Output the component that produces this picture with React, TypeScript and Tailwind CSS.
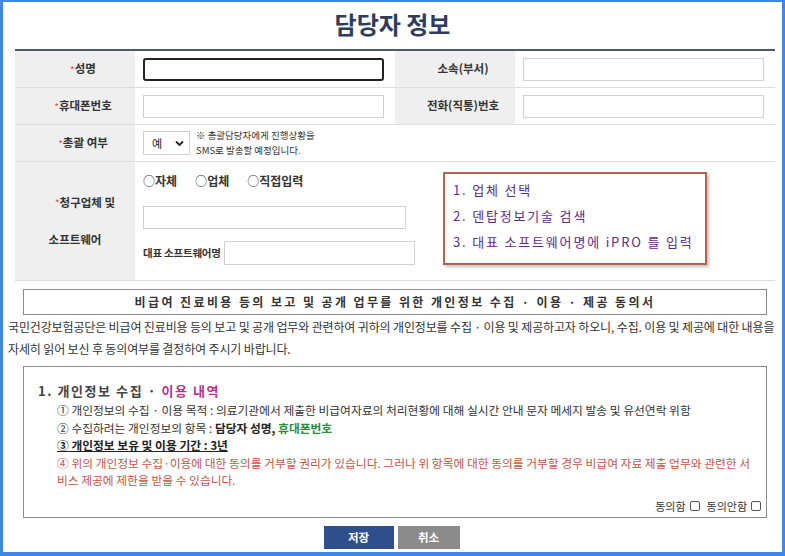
const font = { fontFamily: '"Noto Sans CJK KR", "Noto Sans", sans-serif' };

function Label({ children, required }: { children: React.ReactNode; required?: boolean }) {
  return (
    <div className="flex items-center justify-center bg-[#efefef] pl-4 text-[11.5px] font-semibold text-[#333] border-b border-[#dedede]">
      {required && <span className="text-[#d9534f] text-[10px] font-normal">*</span>}
      {children}
    </div>
  );
}

function Field({ focused }: { focused?: boolean }) {
  return (
    <div className="flex items-center pl-2 border-b border-[#dedede]">
      <div
        className={
          focused
            ? 'w-[241px] h-[23px] border-2 border-[#222] rounded-[3px] bg-white'
            : 'w-[241px] h-[23px] border border-[#d2d2d2] bg-white'
        }
      />
    </div>
  );
}

export default function App() {
  return (
    <div
      className="w-[785px] h-[556px] box-border bg-white border-l-[3px] border-r-[3px] border-t-2 border-b-4 border-[#3f87eb] flex flex-col"
      style={font}
    >
      <h1 className="h-[47px] pt-[6px] text-center text-[24px] leading-[32px] font-bold text-[#2f3d5c]">
        담당자 정보
      </h1>

      {/* 담당자 입력 테이블 */}
      <div className="ml-[12px] w-[760px] border-t-2 border-[#4e586c] grid grid-cols-[120px_260px_120px_260px]">
        <div className="h-[37px] grid">
          <Label required>성명</Label>
        </div>
        <Field focused />
        <Label>소속(부서)</Label>
        <Field />

        <div className="h-[37px] grid">
          <Label required>휴대폰번호</Label>
        </div>
        <Field />
        <Label>전화(직통)번호</Label>
        <Field />

        <div className="h-[37px] grid">
          <Label required>총괄 여부</Label>
        </div>
        <div className="col-span-3 flex items-center pl-2 border-b border-[#dedede]">
          <div className="w-[47px] h-[24px] border border-[#cfcfcf] bg-white flex items-center justify-between pl-[8px] pr-[5px] text-[11px] text-[#222]">
            <span>예</span>
            <svg width="9" height="7" viewBox="0 0 9 7">
              <path d="M1 1.5 L4.5 5 L8 1.5" stroke="#222" strokeWidth="1.8" fill="none" />
            </svg>
          </div>
          <div className="ml-[6px] text-[9.5px] leading-[15px] text-[#333]">
            <div>※ 총괄담당자에게 진행상황을</div>
            <div>SMS로 발송할 예정입니다.</div>
          </div>
        </div>

        <div className="h-[119px] flex flex-col justify-center items-center gap-[20px] bg-[#efefef] text-[11.5px] font-semibold text-[#333] border-b border-[#dedede]">
          <div className="pl-5">
            <span className="text-[#d9534f] text-[10px] font-normal">*</span>청구업체 및
          </div>
          <div>소프트웨어</div>
        </div>
        <div className="col-span-3 flex pl-2 border-b border-[#dedede]">
          <div className="w-[280px] flex flex-col">
            <div className="mt-[11px] flex gap-[18px] text-[12px] leading-[16px] font-semibold text-[#333]">
              <span>
                <span className="font-normal">○</span>자체
              </span>
              <span>
                <span className="font-normal">○</span>업체
              </span>
              <span>
                <span className="font-normal">○</span>직접입력
              </span>
            </div>
            <div className="mt-[17px] w-[263px] h-[23px] border border-[#d2d2d2]" />
            <div className="mt-[12px] flex items-center">
              <span className="text-[10.5px] font-semibold text-[#333] whitespace-nowrap tracking-[-0.02em]">대표 소프트웨어명</span>
              <div className="ml-[3px] w-[191px] h-[24px] border border-[#d2d2d2]" />
            </div>
          </div>
          <div className="ml-[20px] mt-[10px] w-[264px] h-[93px] border-2 border-[#b5634a] shadow-[2px_2px_3px_rgba(0,0,0,0.25)] bg-white px-[8px] pt-[3px] text-[13px] leading-[26px] tracking-[0.14em] text-[#5b2d86]">
            <div>1. 업체 선택</div>
            <div>2. 덴탑정보기술 검색</div>
            <div>3. 대표 소프트웨어명에 iPRO 를 입력</div>
          </div>
        </div>
      </div>

      {/* 동의서 */}
      <div className="ml-[20px] mt-[8px] w-[744px] h-[26px] border border-[#8a8a8a] flex items-center justify-center text-[12px] font-semibold tracking-[0.2em] text-[#333]">
        비급여 진료비용 등의 보고 및 공개 업무를 위한 개인정보 수집 · 이용 · 제공 동의서
      </div>

      <div className="pl-[5px] mt-[1px] text-[12px] leading-[22px] tracking-[-0.012em] text-[#333] whitespace-nowrap">
        <div>
          국민건강보험공단은 비급여 진료비용 등의 보고 및 공개 업무와 관련하여 귀하의 개인정보를 수집 · 이용 및 제공하고자 하오니, 수집. 이용 및 제공에 대한 내용을
        </div>
        <div>자세히 읽어 보신 후 동의여부를 결정하여 주시기 바랍니다.</div>
      </div>

      <div className="ml-[20px] mt-[6px] w-[744px] h-[152px] border border-[#8a8a8a] flex flex-col pl-[14px] pr-[5px] pt-[14px] pb-[3px]">
        <div className="text-[13px] leading-[20px] font-semibold tracking-[0.12em] text-[#444]">
          1. 개인정보 수집 · <span className="text-[#b3358b]">이용 내역</span>
        </div>
        <div className="pl-[19px] text-[11.75px] leading-[17.5px] text-[#333] whitespace-nowrap">
          <div>① 개인정보의 수집 · 이용 목적 : 의료기관에서 제출한 비급여자료의 처리현황에 대해 실시간 안내 문자 메세지 발송 및 유선연락 위함</div>
          <div>
            ② 수집하려는 개인정보의 항목 : <span className="font-bold text-[#222]">담당자 성명,</span>{' '}
            <span className="font-bold text-[#2e8b3c]">휴대폰번호</span>
          </div>
          <div className="font-bold underline text-[#222]">③ 개인정보 보유 및 이용 기간 : 3년</div>
          <div className="text-[#c4554a]">
            ④ 위의 개인정보 수집·이용에 대한 동의를 거부할 권리가 있습니다. 그러나 위 항목에 대한 동의를 거부할 경우 비급여 자료 제출 업무와 관련한 서
          </div>
          <div className="text-[#c4554a]">비스 제공에 제한을 받을 수 있습니다.</div>
        </div>
        <div className="mt-auto flex justify-end items-center gap-[4px] text-[11px] text-[#333]">
          <span>동의함</span>
          <span className="w-[10px] h-[10px] border border-[#555] rounded-[2px]" />
          <span className="ml-[3px]">동의안함</span>
          <span className="w-[10px] h-[10px] border border-[#555] rounded-[2px]" />
        </div>
      </div>

      <div className="mt-[8px] flex justify-center gap-[4px] pr-[2px]">
        <button className="w-[70px] h-[23px] bg-[#2e4f8c] text-white text-[11.5px] font-semibold">저장</button>
        <button className="w-[62px] h-[23px] bg-[#8b8b8b] text-white text-[11.5px] font-semibold">취소</button>
      </div>
    </div>
  );
}
